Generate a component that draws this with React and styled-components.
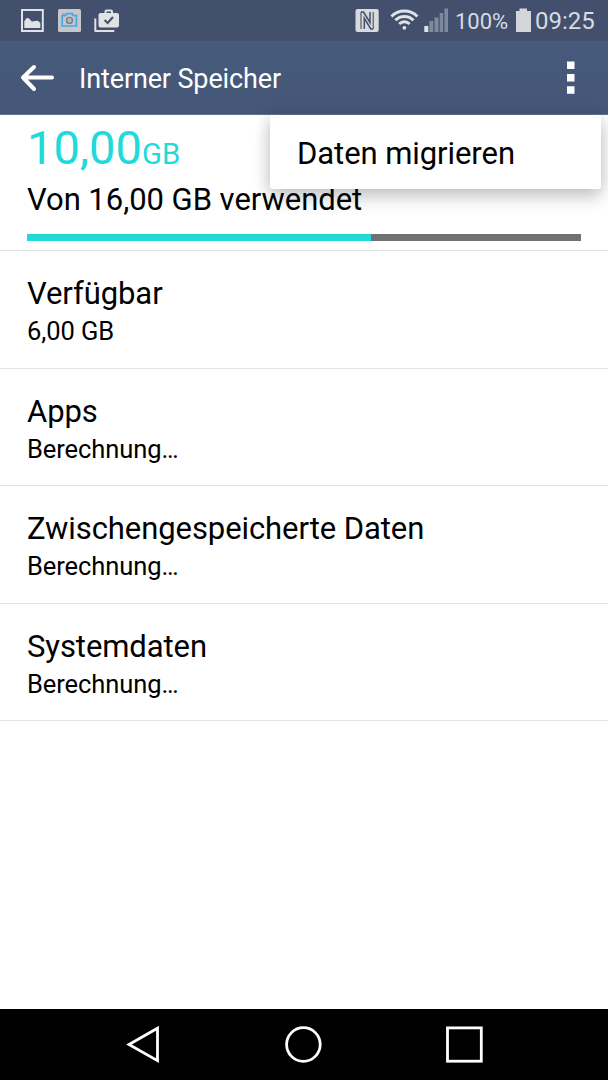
import React from 'react';
import styled, { createGlobalStyle } from 'styled-components';

const GlobalStyle = createGlobalStyle`
  * { box-sizing: border-box; }
  body { margin: 0; background: #fff; font-family: Roboto, "Liberation Sans", sans-serif; color: #000; }
`;

const Screen = styled.div`
  width: 608px;
  height: 1080px;
  display: flex;
  flex-direction: column;
  background: #fff;
  overflow: hidden;
`;

const StatusBar = styled.header`
  height: 41px;
  flex: none;
  display: flex;
  justify-content: space-between;
  background: #42506d;
  color: #d8dbe1;
`;

const StatusGroup = styled.div`
  display: flex;
  height: 41px;
`;

const StatusText = styled.span`
  font-size: ${(p) => p.$size}px;
  line-height: ${(p) => p.$line}px;
  width: ${(p) => p.$width}px;
  margin-left: ${(p) => p.$indent || 0}px;
  white-space: nowrap;
`;

const Icon = styled.svg`
  display: block;
  flex: none;
`;

const AppBar = styled.div`
  height: 74px;
  flex: none;
  display: flex;
  align-items: center;
  position: relative;
  background: linear-gradient(#465a7b, #455777);
  border-bottom: 1px solid #67748f;
  color: #fff;
`;

const Title = styled.h1`
  margin: 0 auto 0 0;
  font-size: 27px;
  font-weight: 400;
  letter-spacing: -0.13px;
  line-height: 40px;
  padding-top: 2px;
  white-space: nowrap;
`;

const Menu = styled.div`
  position: absolute;
  top: 74px;
  right: 7px;
  width: 331px;
  height: 74px;
  padding: 0 27px;
  border-radius: 3px;
  background: #fff;
  color: #000;
  font-size: 31px;
  letter-spacing: -0.07px;
  line-height: 77px;
  white-space: nowrap;
  box-shadow: 0 9px 17px rgba(20, 25, 40, 0.2), 0 0 16px rgba(20, 25, 40, 0.14);
`;

const Summary = styled.section`
  height: 136px;
  flex: none;
  padding: 5px 27px 0;
  border-bottom: 1px solid #e2e2e2;
`;

const Used = styled.div`
  color: #20dada;
  font-size: 47px;
  line-height: 56px;
  height: 60px;
`;

const Unit = styled.span`
  font-size: 29.3px;
`;

const Total = styled.div`
  font-size: 31px;
  letter-spacing: -0.04px;
  line-height: 40px;
  height: 54px;
`;

const Meter = styled.div`
  height: 7px;
  background: #717171;
`;

const MeterFill = styled.div`
  height: 7px;
  width: 344px;
  background: #20dada;
`;

const Row = styled.section`
  height: 117.5px;
  flex: none;
  padding: 23px 27px 0;
  border-bottom: 1px solid #e2e2e2;
`;

const RowTitle = styled.div`
  font-size: 31px;
  letter-spacing: -0.08px;
  line-height: 40px;
`;

const RowValue = styled.div`
  margin-top: 2px;
  font-size: 25.5px;
  letter-spacing: -0.08px;
  line-height: 30px;
`;

const NavBar = styled.nav`
  height: 71px;
  flex: none;
  margin-top: auto;
  display: flex;
  background: #000;
`;

const rows = [
  ['Verfügbar', '6,00 GB'],
  ['Apps', 'Berechnung…'],
  ['Zwischengespeicherte Daten', 'Berechnung…'],
  ['Systemdaten', 'Berechnung…'],
];

function Notifications() {
  return (
    <Icon width="140" height="41" viewBox="0 0 140 41" fill="none">
      <rect x="22" y="10" width="20.8" height="21" stroke="#e0e2e6" strokeWidth="2" />
      <path d="M24.3 28v-6.800l2-2.600 1.500-.8 2 1.400 2 2.200 2.300-.2 2.300-.5 1.800.4 2.100 2V28z" fill="#e0e2e6" />
      <rect x="58" y="9" width="23" height="23" rx="1.5" fill="#c5c7ca" />
      <path d="M62.2 15.700h3.400l1.200-2h5.400l1.200 2h3V26H62.200z" stroke="#43a8e4" strokeWidth="1.7" />
      <circle cx="69.5" cy="20.4" r="3" fill="#b1b9bf" stroke="#71818e" strokeWidth="1.4" />
      <path d="M62.600 14h2" stroke="#71818e" strokeWidth="1" />
      <path d="M95.3 18.5V31h19" stroke="#e0e2e6" strokeWidth="2" strokeLinejoin="round" />
      <path fillRule="evenodd" d="M100.5 13h4v-1.5q0-2 2-2h4.500q2 0 2 2V13h4q2 0 2 2v10.500q0 2-2 2h-16.500q-2 0-2-2V15q0-2 2-2zm6 0h4.500v-1.500h-4.500z" fill="#e0e2e6" />
      <path d="M104.6 20l3 3 5.4-6" stroke="#42506d" strokeWidth="2" />
    </Icon>
  );
}

function Connectivity() {
  return (
    <Icon width="100" height="41" viewBox="350 0 100 41" fill="none">
      <rect x="355.500" y="9" width="23.200" height="23" rx="2" fill="#d8dade" />
      <path d="M361 12V29M373.200 12V29" stroke="#42506d" strokeWidth="1.100" />
      <path d="M361 12H363.500L370 22.500V12" stroke="#42506d" strokeWidth="1.500" />
      <path d="M364.300 29V18.300L370.800 29H373.200" stroke="#42506d" strokeWidth="1.500" />
      <g stroke="#e0e2e6" strokeWidth="2.900">
        <path d="M391.400 16.500a18.200 18.200 0 0 1 26 0" />
        <path d="M395.300 20.300a12.800 12.800 0 0 1 18.200 0" />
        <path d="M399.200 24a7.300 7.300 0 0 1 10.400 0" />
      </g>
      <circle cx="404.400" cy="27.800" r="1.900" fill="#e0e2e6" />
      <path d="M424.300 26h4v6h-4z" fill="#e0e2e6" />
      <path d="M429.300 21h4v11h-4zM434.500 17.500h4V32h-4zM439.700 13h3.500v19h-3.500zM444.500 8.500h3.500V32h-3.500z" fill="#7f899d" />
    </Icon>
  );
}

export default function App() {
  return (
    <Screen>
      <GlobalStyle />
      <StatusBar>
        <StatusGroup><Notifications /></StatusGroup>
        <StatusGroup>
          <Connectivity />
          <StatusText $size={22} $line={43} $width={58} $indent={5}>100%</StatusText>
          <Icon width="22" height="41" viewBox="513 0 22 41">
            <path d="M519.500 8.500h7.500v2.500h4v21h-15V11h3.500z" fill="#d4d6da" />
          </Icon>
          <StatusText $size={24} $line={42} $width={73}>09:25</StatusText>
        </StatusGroup>
      </StatusBar>
      <AppBar>
        <Icon width="79" height="73" viewBox="0 0 79 73" fill="none">
          <path d="M52 36.500H23M34 26L23 36.500 34 48" stroke="#fff" strokeWidth="4" strokeLinecap="round" strokeLinejoin="round" />
        </Icon>
        <Title>Interner Speicher</Title>
        <Icon width="50" height="73" viewBox="558 0 50 73">
          <path d="M567 20.500h7.500V28H567zM567 33h7.500v7.500H567zM567 45.300h7.500v7.500H567z" fill="#fff" />
        </Icon>
        <Menu>Daten migrieren</Menu>
      </AppBar>
      <Summary>
        <Used>10,00<Unit>GB</Unit></Used>
        <Total>Von 16,00 GB verwendet</Total>
        <Meter><MeterFill /></Meter>
      </Summary>
      {rows.map(([title, value]) => (
        <Row key={title}>
          <RowTitle>{title}</RowTitle>
          <RowValue>{value}</RowValue>
        </Row>
      ))}
      <NavBar>
        <Icon width="608" height="71" viewBox="0 0 608 71" fill="none" stroke="#fff" strokeWidth="2.800">
          <path d="M157.500 19.200v32.500L129 35.500z" />
          <circle cx="303.400" cy="35.500" r="16.800" />
          <rect x="447.500" y="18.900" width="33.800" height="33.300" />
        </Icon>
      </NavBar>
    </Screen>
  );
}
